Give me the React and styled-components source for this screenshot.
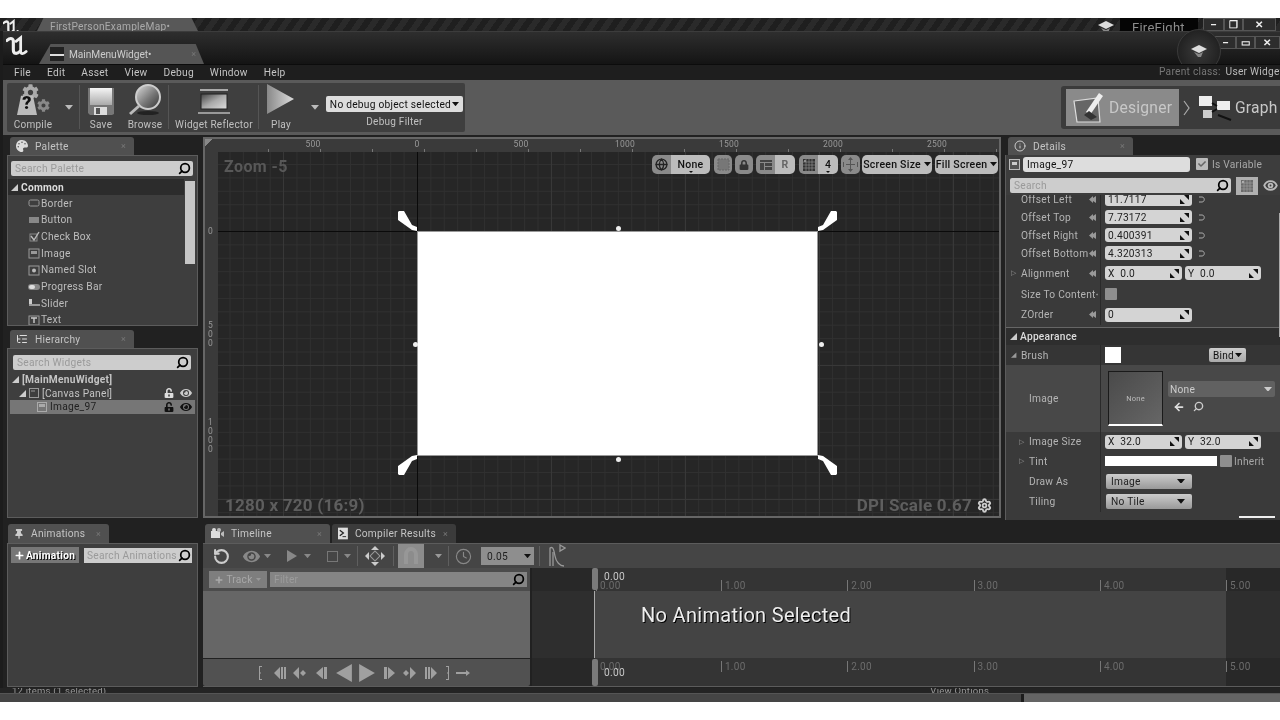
import styled, { createGlobalStyle } from "styled-components"
import { Search, Eye, RotateCcw, Clock, Globe, Settings, Info, ListTree, ArrowLeft } from "lucide-react"
import { FaCog, FaPlus, FaPalette, FaThumbtack, FaEye, FaUnlockAlt, FaCheck, FaLock } from "react-icons/fa"

const GlobalStyle = createGlobalStyle`
body {
    margin: 0;
    background: #fff;
    font-family: Roboto, "Liberation Sans", sans-serif;
}
`

const Logo = ({ size = 24 }) => (
    <svg width={size} height={size} viewBox="0 0 24 24" fill="none" stroke="#eee" strokeLinecap="round">
        <path d="M1 6 C4 3 7 3 8 6 V16 C8 21 12 21 15 18" strokeWidth="3.4" />
        <path d="M11 7 L16 3 V18 C16 21 19 21 22 18" strokeWidth="3" />
    </svg>
)

const Cap = () => (
    <svg width="16" height="14" viewBox="0 0 16 14">
        <path d="M0 5 L8 1 L16 5 L8 9 Z" fill="#ddd" />
        <path d="M3 8 L8 10 L12 8 L10 13 L7 13 Z" fill="#888" />
    </svg>
)

const Caret = ({ c = "#bbb", w = 8 }) => (
    <svg width={w} height={w * 0.6} viewBox="0 0 10 6"><path d="M0 0 H10 L5 6 Z" fill={c} /></svg>
)

const SaveIcon = () => (
    <svg width="28" height="29" viewBox="0 0 28 29">
        <defs>
            <linearGradient id="floppy" x1="0" y1="0" x2="0" y2="1">
                <stop offset="0" stopColor="#f5f5f5" /><stop offset="1" stopColor="#aaa" />
            </linearGradient>
        </defs>
        <path d="M1 1 H27 V27 L25 28 H3 L1 26 Z" fill="#777" />
        <rect x="3" y="1" width="22" height="17" fill="url(#floppy)" />
        <rect x="7" y="20" width="13" height="8" fill="#ddd" />
        <rect x="9" y="21" width="4" height="6" fill="#555" />
    </svg>
)

const BrowseIcon = () => (
    <svg width="34" height="32" viewBox="0 0 34 32">
        <defs>
            <linearGradient id="lens" x1="0" y1="0" x2="1" y2="1">
                <stop offset="0" stopColor="#ddd" /><stop offset="0.55" stopColor="#777" /><stop offset="1" stopColor="#333" />
            </linearGradient>
        </defs>
        <circle cx="20" cy="13" r="12" fill="url(#lens)" stroke="#ccc" strokeWidth="2" />
        <path d="M11 22 L2 30" stroke="#bbb" strokeWidth="3" />
        <ellipse cx="20" cy="29" rx="11" ry="2" fill="#222" />
    </svg>
)

const ReflectorIcon = () => (
    <svg width="34" height="28" viewBox="0 0 34 28">
        <defs>
            <linearGradient id="refl" x1="0" y1="0" x2="1" y2="1">
                <stop offset="0" stopColor="#444" /><stop offset="0.5" stopColor="#aaa" /><stop offset="1" stopColor="#ddd" />
            </linearGradient>
        </defs>
        <path d="M3 1 H31 V3 H3 Z" fill="#aaa" />
        <rect x="4" y="6" width="26" height="15" fill="url(#refl)" stroke="#222" />
        <path d="M1 24 H33 V26 H1 Z" fill="#999" />
    </svg>
)

const PlayIcon = () => (
    <svg width="30" height="33" viewBox="0 0 30 33">
        <defs>
            <linearGradient id="playg" x1="0" y1="0" x2="1" y2="0">
                <stop offset="0" stopColor="#888" /><stop offset="1" stopColor="#ddd" />
            </linearGradient>
        </defs>
        <path d="M1 1 L28 16 L1 31 Z" fill="url(#playg)" />
    </svg>
)

const DesignerIcon = () => (
    <svg width="34" height="34" viewBox="0 0 34 34">
        <path d="M3 10 L27 7 L29 31 L6 31 Z" fill="#666" stroke="#ddd" strokeWidth="1.2" />
        <path d="M15 21 L28 2 L32 5 L19 24 Z" fill="#eee" />
        <path d="M13 24 L18 20 L26 26 L20 29 Z" fill="#333" />
    </svg>
)

const GraphIcon = () => (
    <svg width="34" height="26" viewBox="0 0 34 26">
        <rect x="1" y="1" width="13" height="10" fill="#eee" />
        <rect x="19" y="6" width="13" height="9" fill="#eee" />
        <rect x="5" y="15" width="9" height="8" fill="#ccc" />
        <path d="M14 8 L19 11 M14 17 L19 14 M20 20 L33 25" stroke="#111" strokeWidth="2" />
    </svg>
)

const ChevronGlyph = () => (
    <svg width="7" height="16" viewBox="0 0 7 16" fill="none" stroke="#aaa" strokeWidth="1.2"><path d="M1 1 L6 8 L1 15" /></svg>
)

const CornerHandle = ({ flipX, flipY }) => (
    <svg width="20" height="20" viewBox="0 0 20 20" style={{ transform: `scale(${flipX ? -1 : 1}, ${flipY ? -1 : 1})`, display: "block" }}>
        <path d="M0 1 L1 0 H6 L14 14 L19 16 V20 L14 19 L0 9 Z" fill="#fff" />
    </svg>
)

const SpinArrows = () => (
    <svg width="9" height="9" viewBox="0 0 9 9">
        <path d="M4 0 H9 V5 Z M0 4 L5 9 H0 Z" fill="#111" />
    </svg>
)

const PinDiamond = () => (
    <svg width="9" height="9" viewBox="0 0 9 9">
        <path d="M0 4.5 L4 1 V3 L7 1 V8 L4 6 V8 Z" fill="#999" />
    </svg>
)

const ResetArrow = () => (
    <svg width="7" height="7" viewBox="0 0 7 7" fill="none" stroke="#aaa" strokeWidth="1">
        <path d="M1 1 H4 C7 1 7 6 4 6 H1" />
    </svg>
)

const TreeArrow = ({ open }) => (
    <svg width="7" height="7" viewBox="0 0 7 7">
        {open
            ? <path d="M7 0 V7 H0 Z" fill="#ccc" />
            : <path d="M1 0 L6 3.5 L1 7 Z" fill="none" stroke="#999" />}
    </svg>
)

const paletteIcons = {
    border: <rect x="1" y="3" width="10" height="6" rx="1.5" fill="none" stroke="#999" />,
    button: <rect x="1" y="3" width="10" height="6" fill="#888" />,
    check: <><rect x="2" y="3" width="7" height="7" fill="none" stroke="#888" /><path d="M3 5 L6 9 L11 1" fill="none" stroke="#bbb" strokeWidth="1.4" /></>,
    image: <><rect x="1" y="2" width="10" height="9" fill="none" stroke="#999" /><rect x="3" y="4" width="6" height="3" fill="#999" /></>,
    slot: <><rect x="1" y="2" width="10" height="9" fill="none" stroke="#999" /><circle cx="6" cy="6.5" r="2" fill="#bbb" /></>,
    progress: <><rect x="0" y="3" width="12" height="6" rx="3" fill="#888" /><rect x="1" y="4" width="6" height="4" rx="2" fill="#ddd" /></>,
    slider: <><rect x="1" y="2" width="3" height="6" fill="#ccc" /><rect x="1" y="7" width="11" height="2" fill="#999" /></>,
    text: <><rect x="1" y="2" width="10" height="9" fill="none" stroke="#999" /><path d="M3 4 H9 M6 4 V9" stroke="#ccc" strokeWidth="1.4" /></>,
}

const paletteItems = [
    ["border", "Border"], ["button", "Button"], ["check", "Check Box"], ["image", "Image"],
    ["slot", "Named Slot"], ["progress", "Progress Bar"], ["slider", "Slider"], ["text", "Text"],
]

const playbackIcons = [
    ["M6 1 H9 V2 H7 V7 L8 8 L7 9 V14 H9 V15 H6 Z", 16, 0],
    ["M1 8 L7 2 V14 Z M8 2 H10 V14 H8 Z M11 2 H13 V14 H11 Z", 16, 4],
    ["M1 8 L7 2 V14 Z M11 5 L14 8 L11 11 L8 8 Z", 16, 3],
    ["M2 8 L9 2 V14 Z M10 2 H13 V14 H10 Z", 16, 6],
    ["M1 8 L15 0 V16 Z", 18, 5],
    ["M1 0 L15 8 L1 16 Z", 18, 5],
    ["M3 2 H6 V14 H3 Z M7 2 L14 8 L7 14 Z", 16, 5],
    ["M5 5 L8 8 L5 11 L2 8 Z M9 2 L15 8 L9 14 Z", 16, 4],
    ["M3 2 H5 V14 H3 Z M6 2 H8 V14 H6 Z M9 2 L15 8 L9 14 Z", 16, 5],
    ["M7 1 H10 V15 H7 V14 H9 V9 L8 8 L9 7 V2 H7 Z", 16, 1],
    ["M1 7 H11 V5 L15 8 L11 11 V9 H1 Z", 16, 0],
]

const rulerLabels = [[95, "500"], [199, "0"], [303, "500"], [407, "1000"], [511, "1500"], [615, "2000"], [719, "2500"]]
const timeLabels = ["1.00", "2.00", "3.00", "4.00"]

const offsetRows = [["Offset Left", "11.7117"], ["Offset Top", "7.73172"], ["Offset Right", "0.400391"], ["Offset Bottom", "4.320313"]]

const App = () => {
    return (
        <Screen>
            <GlobalStyle />
            <TopMargin />
            <BackWindow>
                <BackBar>
                    <BackLogo><Logo size={16} /></BackLogo>
                    <BackTab>FirstPersonExampleMap•</BackTab>
                    <CapSlot><Cap /></CapSlot>
                    <ProjectName>FireFight</ProjectName>
                    <WinButtons $ml={5}>
                        <WinBtn $w={21}>–</WinBtn><WinBtn $w={19}>❐</WinBtn><WinBtn $w={33}>✕</WinBtn>
                    </WinButtons>
                </BackBar>

                <Editor>
                    <TitleBar>
                        <LogoSlot><Logo size={22} /></LogoSlot>
                        <DocTab>
                            <DocIcon />
                            <span>MainMenuWidget•</span>
                            <TabClose>×</TabClose>
                        </DocTab>
                        <CapGlow><Cap /></CapGlow>
                        <FrontButtons>
                            <WinBtn $w={21}>–</WinBtn><WinBtn $w={19}>▭</WinBtn><WinBtn $w={25}>✕</WinBtn>
                        </FrontButtons>
                    </TitleBar>

                    <MenuBar>
                        {["File", "Edit", "Asset", "View", "Debug", "Window", "Help"].map((m) => <MenuItem key={m}>{m}</MenuItem>)}
                        <ParentClass>Parent class: <strong>User Widget</strong></ParentClass>
                    </MenuBar>

                    <Toolbar>
                        <ToolPanel>
                            <ToolButton $w={52}>
                                <CompileIcon>
                                    <FaCog size={17} color="#aaa" />
                                    <GearSmall><FaCog size={13} color="#888" /></GearSmall>
                                    <Question>?</Question>
                                </CompileIcon>
                                <ToolLabel>Compile</ToolLabel>
                            </ToolButton>
                            <CaretSlot $w={20}><Caret /></CaretSlot>
                            <ToolSep />
                            <ToolButton $w={42}><SaveIcon /><ToolLabel>Save</ToolLabel></ToolButton>
                            <ToolButton $w={46}><BrowseIcon /><ToolLabel>Browse</ToolLabel></ToolButton>
                            <ToolSep />
                            <ToolButton $w={88} $ml={1}><ReflectorIcon /><ToolLabel>Widget Reflector</ToolLabel></ToolButton>
                            <ToolSep />
                            <ToolButton $w={44}><PlayIcon /><ToolLabel>Play</ToolLabel></ToolButton>
                            <CaretSlot $w={23}><Caret /></CaretSlot>
                            <DebugBox>
                                <DebugSelect>No debug object selected <Caret c="#111" w={7} /></DebugSelect>
                                <ToolLabel>Debug Filter</ToolLabel>
                            </DebugBox>
                        </ToolPanel>
                        <ModePanel>
                            <ModeButton $active><DesignerIcon />Designer</ModeButton>
                            <ModeChevron><ChevronGlyph /></ModeChevron>
                            <ModeButton><GraphIcon />Graph</ModeButton>
                        </ModePanel>
                    </Toolbar>

                    <Body>
                        <LeftColumn>
                            <Dock $h={189}>
                                <Tab $w={124} $ml={3}><FaPalette size={12} color="#ddd" />Palette<TabClose>×</TabClose></Tab>
                                <Panel>
                                    <SearchBox $m="5px 4px 3px 3px"><span>Search Palette</span><SearchGlyph /></SearchBox>
                                    <PaletteList>
                                        <PaletteRows>
                                            <CategoryRow><TreeArrow open />Common</CategoryRow>
                                            {paletteItems.map(([kind, label]) => (
                                                <PaletteRow key={label}>
                                                    <svg width="12" height="12" viewBox="0 0 12 12">{paletteIcons[kind]}</svg>
                                                    {label}
                                                </PaletteRow>
                                            ))}
                                        </PaletteRows>
                                        <PaletteTrack><PaletteThumb /></PaletteTrack>
                                    </PaletteList>
                                </Panel>
                            </Dock>
                            <Dock $h={188}>
                                <Tab $w={124} $ml={3}><ListTree size={12} color="#ddd" />Hierarchy<TabClose>×</TabClose></Tab>
                                <Panel>
                                    <SearchBox $m="6px 6px 3px 5px"><span>Search Widgets</span><SearchGlyph /></SearchBox>
                                    <TreeRow $indent={4} $bold><TreeArrow open />[MainMenuWidget]</TreeRow>
                                    <TreeRow $indent={11}>
                                        <TreeArrow open />
                                        <svg width="10" height="10" viewBox="0 0 10 10"><rect x="0.5" y="0.5" width="9" height="9" fill="none" stroke="#999" /><path d="M2 3 H6" stroke="#999" /></svg>
                                        [Canvas Panel]
                                        <TreeIcons><FaUnlockAlt size={10} color="#ddd" /><FaEye size={12} color="#ccc" /></TreeIcons>
                                    </TreeRow>
                                    <TreeRow $indent={29} $selected>
                                        <svg width="10" height="10" viewBox="0 0 10 10"><rect x="0.5" y="0.5" width="9" height="9" fill="none" stroke="#aaa" /><rect x="2" y="2" width="6" height="3" fill="#aaa" /></svg>
                                        Image_97
                                        <TreeIcons><FaUnlockAlt size={10} color="#111" /><FaEye size={12} color="#111" /></TreeIcons>
                                    </TreeRow>
                                </Panel>
                            </Dock>
                        </LeftColumn>

                        <CanvasFrame>
                            <RulerCorner />
                            <TopRuler>
                                {rulerLabels.map(([x, t]) => <TopLabel key={x} $x={x}>{t}</TopLabel>)}
                            </TopRuler>
                            <LeftRuler>
                                <SideLabel $y={75}>0</SideLabel>
                                <SideLabel $y={169}>500</SideLabel>
                                <SideLabel $y={266}>1000</SideLabel>
                            </LeftRuler>
                            <Grid>
                                <AxisX /><AxisY />
                                <WidgetImage />
                                <HandleSlot $x={180} $y={59}><CornerHandle /></HandleSlot>
                                <HandleSlot $x={599} $y={59}><CornerHandle flipX /></HandleSlot>
                                <HandleSlot $x={180} $y={303}><CornerHandle flipY /></HandleSlot>
                                <HandleSlot $x={599} $y={303}><CornerHandle flipX flipY /></HandleSlot>
                                <Dot $x={399} $y={75} /><Dot $x={196} $y={191} /><Dot $x={602} $y={191} /><Dot $x={399} $y={306} />
                                <ZoomText>Zoom -5</ZoomText>
                                <SizeText>1280 x 720 (16:9)</SizeText>
                                <DpiText>DPI Scale 0.67 <Settings size={15} color="#ccc" strokeWidth={3} /></DpiText>
                                <CanvasTools>
                                    <Seg>
                                        <SegPart $w={19} $dark><Globe size={13} color="#222" strokeWidth={2.4} /></SegPart>
                                        <SegPart $w={39}>None<SegCaret /></SegPart>
                                    </Seg>
                                    <Seg $ml={4}><SegPart $w={18} $dark><SquareGlyph /></SegPart></Seg>
                                    <Seg $ml={3}><SegPart $w={18} $dark><FaLock size={10} color="#333" /></SegPart></Seg>
                                    <Seg $ml={3}>
                                        <SegPart $w={19} $dark><LayoutGlyph /></SegPart>
                                        <SegPart $w={20} $muted>R</SegPart>
                                    </Seg>
                                    <Seg $ml={4}>
                                        <SegPart $w={19} $dark><GridGlyph /></SegPart>
                                        <SegPart $w={20}>4<SegCaret /></SegPart>
                                    </Seg>
                                    <Seg $ml={3}><SegPart $w={19} $dark><ScaleGlyph /></SegPart></Seg>
                                    <Seg $ml={2}><SegPart $w={70}>Screen Size&nbsp;<Caret c="#111" w={7} /></SegPart></Seg>
                                    <Seg $ml={3}><SegPart $w={63}>Fill Screen&nbsp;<Caret c="#111" w={7} /></SegPart></Seg>
                                </CanvasTools>
                            </Grid>
                        </CanvasFrame>

                        <RightColumn>
                            <Tab $w={125} $ml={3}><Info size={12} color="#ccc" />Details<TabClose>×</TabClose></Tab>
                            <DetailsPanel>
                                <NameRow>
                                    <svg width="11" height="11" viewBox="0 0 11 11"><rect x="0.5" y="0.5" width="10" height="10" fill="#555" stroke="#bbb" /><rect x="3" y="3" width="5" height="3" fill="#ccc" /></svg>
                                    <NameInput>Image_97</NameInput>
                                    <CheckBox $checked $ml={6}><FaCheck size={8} color="#666" /></CheckBox>
                                    <IsVariable>Is Variable</IsVariable>
                                </NameRow>
                                <FilterRow>
                                    <SearchBox $m="0"><span>Search</span><SearchGlyph /></SearchBox>
                                    <GridButton><GridGlyph /></GridButton>
                                    <Eye size={15} color="#bbb" strokeWidth={3} />
                                </FilterRow>
                                <PropScroll>
                                    <ScrollLine />
                                    {offsetRows.map(([label, val]) => (
                                        <PropRow key={label} $h={18}>
                                            <PropLabel>{label}<PinDiamond /></PropLabel>
                                            <PropValue>
                                                <NumBox $w={87}>{val}<SpinArrows /></NumBox>
                                                <ResetSlot><ResetArrow /></ResetSlot>
                                            </PropValue>
                                        </PropRow>
                                    ))}
                                    <PropRow $h={22}>
                                        <PropLabel $arrow>Alignment<PinDiamond /></PropLabel>
                                        <PropValue>
                                            <NumBox $w={77}>X&nbsp;&nbsp;0.0<SpinArrows /></NumBox>
                                            <NumBox $w={76} $ml={3}>Y&nbsp;&nbsp;0.0<SpinArrows /></NumBox>
                                        </PropValue>
                                    </PropRow>
                                    <PropRow $h={20}>
                                        <PropLabel>Size To Content<PinDiamond /></PropLabel>
                                        <PropValue><CheckBox /></PropValue>
                                    </PropRow>
                                    <PropRow $h={21}>
                                        <PropLabel>ZOrder<PinDiamond /></PropLabel>
                                        <PropValue><NumBox $w={87}>0<SpinArrows /></NumBox></PropValue>
                                    </PropRow>
                                    <SectionHeader><TreeArrow open />Appearance</SectionHeader>
                                    <PropRow $h={20} $bg="#353535">
                                        <PropLabel $open>Brush</PropLabel>
                                        <PropValue>
                                            <Swatch />
                                            <BindButton>Bind <Caret c="#111" w={7} /></BindButton>
                                        </PropValue>
                                    </PropRow>
                                    <PropRow $h={67} $bg="#484848">
                                        <PropLabel $sub>Image</PropLabel>
                                        <PropValue>
                                            <Thumb>None</Thumb>
                                            <ImageSide>
                                                <AssetSelect>None<Caret c="#ccc" /></AssetSelect>
                                                <AssetTools><ArrowLeft size={12} color="#ddd" strokeWidth={3.5} /><Search size={11} color="#ccc" strokeWidth={3} style={{ transform: "scaleX(-1)" }} /></AssetTools>
                                            </ImageSide>
                                        </PropValue>
                                    </PropRow>
                                    <PropRow $h={19}>
                                        <PropLabel $sub $arrow>Image Size</PropLabel>
                                        <PropValue>
                                            <NumBox $w={77}>X&nbsp;&nbsp;32.0<SpinArrows /></NumBox>
                                            <NumBox $w={76} $ml={3}>Y&nbsp;&nbsp;32.0<SpinArrows /></NumBox>
                                        </PropValue>
                                    </PropRow>
                                    <PropRow $h={20}>
                                        <PropLabel $sub $arrow>Tint</PropLabel>
                                        <PropValue>
                                            <TintBar />
                                            <CheckBox $ml={3} />
                                            <Inherit>Inherit</Inherit>
                                        </PropValue>
                                    </PropRow>
                                    <PropRow $h={20}>
                                        <PropLabel $sub>Draw As</PropLabel>
                                        <PropValue><ComboBox>Image<Caret c="#111" /></ComboBox></PropValue>
                                    </PropRow>
                                    <PropRow $h={21}>
                                        <PropLabel $sub>Tiling</PropLabel>
                                        <PropValue><ComboBox>No Tile<Caret c="#111" /></ComboBox></PropValue>
                                    </PropRow>
                                    <ClippedChip />
                                </PropScroll>
                            </DetailsPanel>
                        </RightColumn>
                    </Body>

                    <BottomDock>
                        <AnimColumn>
                            <Tab $w={101} $ml={1} $h={19}><FaThumbtack size={10} color="#ccc" />Animations<TabClose>×</TabClose></Tab>
                            <Panel>
                                <AnimBar>
                                    <AddButton><FaPlus size={9} color="#fff" />Animation</AddButton>
                                    <AnimSearch><span>Search Animations</span><SearchGlyph /></AnimSearch>
                                </AnimBar>
                            </Panel>
                        </AnimColumn>
                        <TimelineColumn>
                            <TabRow>
                                <Tab $w={125} $ml={2} $h={19}><FilmGlyph />Timeline<TabClose>×</TabClose></Tab>
                                <Tab $w={124} $ml={2} $h={19} $dim><ScriptGlyph />Compiler Results<TabClose>×</TabClose></Tab>
                            </TabRow>
                            <TimelinePanel>
                                <TimelineBar>
                                    <ToolSlot $ml={9} $w={18}><RotateCcw size={17} color="#ccc" strokeWidth={3} /></ToolSlot>
                                    <ToolSlot $ml={11} $w={20}><FaEye size={17} color="#888" /></ToolSlot>
                                    <ToolSlot $ml={1} $w={10}><Caret c="#888" w={7} /></ToolSlot>
                                    <ToolSlot $ml={12} $w={16}><svg width="10" height="12" viewBox="0 0 10 12"><path d="M0 0 L10 6 L0 12 Z" fill="#888" /></svg></ToolSlot>
                                    <ToolSlot $ml={2} $w={10}><Caret c="#888" w={7} /></ToolSlot>
                                    <ToolSlot $ml={12} $w={16}><svg width="11" height="11" viewBox="0 0 11 11"><rect x="0.5" y="0.5" width="10" height="10" fill="none" stroke="#777" /></svg></ToolSlot>
                                    <ToolSlot $ml={2} $w={10}><Caret c="#888" w={7} /></ToolSlot>
                                    <BarSep $ml={5} />
                                    <ToolSlot $ml={6} $w={22}><KeysGlyph /></ToolSlot>
                                    <BarSep $ml={7} />
                                    <MagnetButton><svg width="16" height="18" viewBox="0 0 16 18" fill="none" stroke="#979797" strokeWidth="4"><path d="M3 17 V8 C3 0 13 0 13 8 V17" /></svg></MagnetButton>
                                    <ToolSlot $ml={9} $w={10}><Caret c="#999" w={7} /></ToolSlot>
                                    <BarSep $ml={5} />
                                    <ToolSlot $ml={5} $w={18}><Clock size={17} color="#888" strokeWidth={1.6} /></ToolSlot>
                                    <SnapBox>0.05<Caret c="#111" w={7} /></SnapBox>
                                    <BarSep $ml={5} />
                                    <ToolSlot $ml={7} $w={20}><CurveGlyph /></ToolSlot>
                                </TimelineBar>
                                <TimelineBody>
                                    <TrackColumn>
                                        <TrackRow>
                                            <TrackButton><FaPlus size={8} color="#aaa" />Track <Caret c="#999" w={5} /></TrackButton>
                                            <FilterBox><span>Filter</span><SearchGlyph /></FilterBox>
                                        </TrackRow>
                                        <TrackArea />
                                        <PlaybackRow>
                                            {playbackIcons.map(([d, size, ml], i) => (
                                                <PlaybackSlot key={i} $ml={ml}>
                                                    <svg width={size} height={size} viewBox="0 0 16 16"><path d={d} fill="#a0a0a0" /></svg>
                                                </PlaybackSlot>
                                            ))}
                                        </PlaybackRow>
                                    </TrackColumn>
                                    <TimeColumn>
                                        <TimeRuler $h={23}>
                                            <TimeValue $top={3}>0.00</TimeValue>
                                            <TimeTick $x={64} $top={12}>0.00</TimeTick>
                                            {timeLabels.map((t, i) => <TimeTick key={t} $x={189 + i * 126.3} $top={12}>{t}</TimeTick>)}
                                            <TimeTick $x={694} $top={12}>5.00</TimeTick>
                                            <PlayHead $top={0} $h={22} />
                                        </TimeRuler>
                                        <TimeMiddle>
                                            <PlayLine />
                                            <NoAnimation>No Animation Selected</NoAnimation>
                                        </TimeMiddle>
                                        <TimeRuler $h={28}>
                                            <TimeTick $x={64} $top={3}>0.00</TimeTick>
                                            <TimeValue $top={9}>0.00</TimeValue>
                                            {timeLabels.map((t, i) => <TimeTick key={t} $x={189 + i * 126.3} $top={3}>{t}</TimeTick>)}
                                            <TimeTick $x={694} $top={3}>5.00</TimeTick>
                                            <PlayHead $top={1} $h={27} />
                                        </TimeRuler>
                                    </TimeColumn>
                                </TimelineBody>
                            </TimelinePanel>
                        </TimelineColumn>
                    </BottomDock>
                </Editor>

                <BackStatus>
                    <StatusText>12 items (1 selected)</StatusText>
                    <StatusText $ml={824}>View Options</StatusText>
                </BackStatus>
                <BackFooter><FooterLeft /><FooterRight /></BackFooter>
            </BackWindow>
        </Screen>
    )
}

const SearchGlyph = () => <Search size={13} color="#000" strokeWidth={3.2} style={{ transform: "scaleX(-1)", flexShrink: 0 }} />
const SquareGlyph = () => <svg width="13" height="13" viewBox="0 0 13 13"><rect x="1" y="1" width="11" height="11" fill="#777" stroke="#666" strokeDasharray="2 1" /></svg>
const LayoutGlyph = () => <svg width="12" height="12" viewBox="0 0 12 12"><path d="M0 1 H12 V3 H0 Z M0 4 H4 V11 H0 Z M5 4 H12 V7 H5 Z M5 8 H12 V11 H5 Z" fill="#444" /></svg>
const GridGlyph = () => <svg width="12" height="12" viewBox="0 0 12 12"><path d="M0 0 H12 V12 H0 Z M1 3 H3 V1 H1 Z" fill="#333" /><path d="M3 0 V12 M6 0 V12 M9 0 V12 M0 3 H12 M0 6 H12 M0 9 H12" stroke="#999" strokeWidth="0.6" /></svg>
const ScaleGlyph = () => <svg width="15" height="15" viewBox="0 0 15 15" fill="#555"><path d="M7.5 0 L10 3 H5 Z M7.5 15 L5 12 H10 Z M0 5 V10 H1 V5 Z M14 5 V10 H15 V5 Z M3 7 H12 V8 H3 Z M7 3 H8 V12 H7 Z" /></svg>
const FilmGlyph = () => <svg width="13" height="11" viewBox="0 0 13 11"><rect x="0" y="3" width="9" height="7" fill="#ddd" /><circle cx="3" cy="2" r="2" fill="#ddd" /><circle cx="8" cy="2" r="2" fill="#bbb" /><path d="M10 5 L13 3 V9 L10 7 Z" fill="#bbb" /></svg>
const ScriptGlyph = () => <svg width="11" height="13" viewBox="0 0 11 13"><rect width="11" height="13" fill="#ddd" /><path d="M2 3 L6 6 L2 9" stroke="#222" fill="none" strokeWidth="1.4" /><path d="M5 10 H9" stroke="#222" /></svg>
const KeysGlyph = () => <svg width="20" height="20" viewBox="0 0 20 20" fill="#ccc"><path d="M10 0 L14 4 H6 Z M10 20 L6 16 H14 Z M0 10 L4 6 V14 Z M20 10 L16 14 V6 Z" /><rect x="6.5" y="6.5" width="7" height="7" fill="none" stroke="#999" transform="rotate(45 10 10)" /></svg>
const CurveGlyph = () => <svg width="18" height="24" viewBox="0 0 18 24" fill="none" stroke="#999" strokeWidth="1.3"><path d="M2 22 V4 C5 2 6 6 7 12 C8 18 12 22 16 22" /><path d="M5 22 V8 M12 1 L17 4 L12 7 Z" /></svg>

export default App

const Screen = styled.div`
width: 1280px;
height: 720px;
background: #fff;
display: flex;
flex-direction: column;
overflow: hidden;
filter: blur(0.35px);
font-size: 10.2px;
letter-spacing: 0.25px;
color: #c8c8c8;
`

const TopMargin = styled.div`
height: 18px;
flex-shrink: 0;
`

const BackWindow = styled.div`
height: 684px;
display: flex;
flex-direction: column;
background: #1c1c1c;
`

const BackBar = styled.div`
height: 13px;
display: flex;
align-items: flex-start;
overflow: hidden;
background: repeating-linear-gradient(-55deg, #2a2a2a 0 6px, #1f1f1f 6px 12px);
`

const BackLogo = styled.div`
width: 37px;
padding-left: 3px;
box-sizing: border-box;
margin-top: 1px;
`

const BackTab = styled.div`
width: 161px;
height: 13px;
padding-left: 13px;
box-sizing: border-box;
background: #585858;
clip-path: polygon(0 100%, 4% 0, 96% 0, 100% 100%);
font-size: 10.2px;
line-height: 18px;
color: #aaa;
`

const CapSlot = styled.div`
margin-left: 900px;
margin-top: 2px;
width: 22px;
`

const ProjectName = styled.div`
width: 78px;
height: 13px;
background: #050505;
font-size: 13px;
line-height: 20px;
color: #8c8c8c;
padding-left: 12px;
box-sizing: border-box;
`

const WinButtons = styled.div`
display: flex;
margin-left: ${(p) => p.$ml}px;
height: 13px;
`

const FrontButtons = styled.div`
display: flex;
height: 13px;
margin: 4px 0 0 auto;
`

const WinBtn = styled.div`
width: ${(p) => p.$w}px;
height: 13px;
box-sizing: border-box;
border: 1px solid #555;
background: #2d2d2d;
color: #eee;
font-size: 10px;
font-weight: 700;
line-height: 11px;
text-align: center;
`

const Editor = styled.div`
height: 657px;
flex-shrink: 0;
margin-left: 3px;
display: flex;
flex-direction: column;
background: #212121;
border-top: 1px solid #3c3c3c;
box-sizing: border-box;
`

const TitleBar = styled.div`
height: 32px;
flex-shrink: 0;
display: flex;
background: linear-gradient(#2e2e2e, #141414);
position: relative;
`

const LogoSlot = styled.div`
width: 36px;
padding: 3px 0 0 3px;
box-sizing: border-box;
`

const DocTab = styled.div`
width: 165px;
height: 20px;
margin-top: 12px;
background: #555;
clip-path: polygon(0 100%, 7% 0, 95% 0, 100% 100%);
display: flex;
align-items: center;
gap: 5px;
padding-left: 11px;
box-sizing: border-box;
color: #ccc;
letter-spacing: -0.05px;
`

const DocIcon = styled.div`
width: 14px;
height: 14px;
background: linear-gradient(#222 50%, #ddd 50%, #ddd 65%, #222 65%);
`

const TabClose = styled.span`
margin-left: auto;
margin-right: 8px;
color: #777;
font-size: 9px;
`

const CapGlow = styled.div`
position: absolute;
left: 1174px;
top: -3px;
width: 44px;
height: 44px;
border-radius: 50%;
background: radial-gradient(#3a3a3a, #222 70%);
border: 1px solid #3a3a3a;
box-sizing: border-box;
display: flex;
align-items: center;
justify-content: center;
`

const MenuBar = styled.div`
height: 16px;
flex-shrink: 0;
display: flex;
align-items: center;
gap: 16px;
padding-left: 11px;
background: #1e1e1e;
border-top: 1px solid #0c0c0c;
box-sizing: border-box;
position: relative;
`

const MenuItem = styled.span`
color: #c4c4c4;
`

const ParentClass = styled.div`
position: absolute;
left: 1156px;
top: 1px;
white-space: nowrap;
color: #777;
strong {
    color: #bbb;
    font-weight: 400;
    margin-left: 2px;
}
`

const Toolbar = styled.div`
height: 55px;
flex-shrink: 0;
display: flex;
justify-content: space-between;
align-items: center;
background: #5a5a5a;
padding-left: 4px;
`

const ToolPanel = styled.div`
width: 458px;
height: 49px;
display: flex;
background: #3f3f3f;
border-radius: 2px;
`

const ToolButton = styled.div`
width: ${(p) => p.$w}px;
margin-left: ${(p) => p.$ml || 0}px;
height: 49px;
display: flex;
flex-direction: column;
align-items: center;
justify-content: flex-end;
gap: 2px;
padding-bottom: 1px;
box-sizing: border-box;
`

const ToolLabel = styled.span`
white-space: nowrap;
line-height: 13px;
font-size: 10px;
color: #c0c0c0;
`

const CompileIcon = styled.div`
width: 36px;
height: 32px;
position: relative;
svg {
    position: absolute;
    left: 7px;
    top: 0;
}
`

const GearSmall = styled.div`
position: absolute;
left: 15px;
top: 15px;
`

const Question = styled.span`
position: absolute;
left: 2px;
top: 7px;
width: 20px;
height: 24px;
background: #bbb;
clip-path: polygon(20% 20%, 80% 20%, 100% 100%, 0 100%);
color: #111;
font-size: 18px;
font-weight: 900;
line-height: 24px;
text-align: center;
`

const CaretSlot = styled.div`
width: ${(p) => p.$w}px;
display: flex;
align-items: center;
justify-content: center;
`

const ToolSep = styled.div`
width: 1px;
height: 44px;
margin-top: 2px;
background: #555;
`

const DebugBox = styled.div`
width: 137px;
display: flex;
flex-direction: column;
align-items: center;
padding-top: 13px;
gap: 3px;
`

const DebugSelect = styled.div`
width: 137px;
height: 16px;
box-sizing: border-box;
background: #ddd;
border-radius: 2px;
color: #111;
display: flex;
align-items: center;
justify-content: center;
gap: 1px;
white-space: nowrap;
`

const ModePanel = styled.div`
width: 219px;
height: 43px;
background: #3b3b3b;
border-radius: 3px 0 0 3px;
display: flex;
align-items: center;
padding-left: 5px;
box-sizing: border-box;
`

const ModeButton = styled.div`
width: ${(p) => (p.$active ? 113 : 86)}px;
height: 37px;
flex-shrink: 0;
background: ${(p) => (p.$active ? "#8a8a8a" : "transparent")};
display: flex;
align-items: center;
gap: ${(p) => (p.$active ? 4 : 3)}px;
padding-left: ${(p) => (p.$active ? 5 : 4)}px;
box-sizing: border-box;
font-size: 15.6px;
color: #c8c8c8;
`

const ModeChevron = styled.span`
width: 15px;
display: flex;
justify-content: center;
flex-shrink: 0;
`

const Body = styled.div`
height: 385px;
flex-shrink: 0;
display: flex;
padding-left: 4px;
background: #212121;
`

const LeftColumn = styled.div`
width: 191px;
flex-shrink: 0;
display: flex;
flex-direction: column;
padding-top: 2px;
gap: 4px;
`

const Dock = styled.div`
height: ${(p) => p.$h}px;
display: flex;
flex-direction: column;
`

const Tab = styled.div`
width: ${(p) => p.$w}px;
height: ${(p) => p.$h || 18}px;
flex-shrink: 0;
margin-left: ${(p) => p.$ml}px;
box-sizing: border-box;
border-radius: 3px 3px 0 0;
background: ${(p) => (p.$dim ? "#3b3b3b" : "#505050")};
display: flex;
align-items: center;
gap: 7px;
padding-left: 6px;
color: #c4c4c4;
white-space: nowrap;
`

const TabRow = styled.div`
display: flex;
`

const Panel = styled.div`
flex: 1;
min-height: 0;
overflow: hidden;
background: #3e3e3e;
border: 1px solid #5c5c5c;
box-sizing: border-box;
`

const SearchBox = styled.div`
flex: 1;
height: 15px;
margin: ${(p) => p.$m};
padding: 0 2px 0 4px;
display: flex;
align-items: center;
justify-content: space-between;
background: #cdcdcd;
border-radius: 2px;
color: #9a9a9a;
`

const PaletteList = styled.div`
display: flex;
height: 148px;
`

const PaletteRows = styled.div`
width: 176px;
overflow: hidden;
`

const CategoryRow = styled.div`
height: 16px;
background: #2c2c2c;
display: flex;
align-items: center;
gap: 3px;
padding-left: 3px;
font-weight: 700;
color: #ddd;
`

const PaletteRow = styled.div`
height: 16.65px;
display: flex;
align-items: center;
gap: 1px;
padding-left: 20px;
color: #bdbdbd;
`

const PaletteTrack = styled.div`
width: 10px;
margin-left: 1px;
padding-top: 2px;
`

const PaletteThumb = styled.div`
height: 83px;
background: #c6c6c6;
`

const TreeRow = styled.div`
height: 13.5px;
display: flex;
align-items: center;
gap: 3px;
margin: ${(p) => (p.$selected ? "0 2px 0 2px" : "0")};
padding-left: ${(p) => (p.$selected ? p.$indent - 2 : p.$indent)}px;
padding-right: ${(p) => (p.$selected ? 3 : 5)}px;
background: ${(p) => (p.$selected ? "#767676" : "transparent")};
color: ${(p) => (p.$selected ? "#222" : "#c4c4c4")};
font-weight: ${(p) => (p.$bold ? 700 : 400)};
&:nth-of-type(2) {
    margin-top: 3px;
}
`

const TreeIcons = styled.div`
margin-left: auto;
display: flex;
align-items: center;
gap: 6px;
`

const CanvasFrame = styled.div`
width: 798px;
height: 381px;
flex-shrink: 0;
margin: 2px 4px 0 5px;
box-sizing: border-box;
border: 2px solid #666;
display: grid;
grid-template-columns: 13px 1fr;
grid-template-rows: 13px 1fr;
background: #3a3a3a;
`

const RulerCorner = styled.div`
background: linear-gradient(135deg, #888 0 5px, transparent 5px);
`

const TopRuler = styled.div`
position: relative;
background:
    repeating-linear-gradient(90deg, transparent 0 51px, #777 51px 52px) -1px 100% / 100% 3px no-repeat;
`

const TopLabel = styled.span`
position: absolute;
left: ${(p) => p.$x}px;
top: 0;
transform: translateX(-50%);
font-size: 8.5px;
color: #999;
`

const LeftRuler = styled.div`
position: relative;
`

const SideLabel = styled.span`
position: absolute;
left: 3px;
top: ${(p) => p.$y}px;
width: 6px;
font-size: 8.5px;
line-height: 9px;
word-break: break-all;
color: #999;
`

const Grid = styled.div`
position: relative;
overflow: hidden;
background-color: #262626;
background-image:
    linear-gradient(#383838 1px, transparent 1px),
    linear-gradient(90deg, #383838 1px, transparent 1px),
    linear-gradient(#303030 1px, transparent 1px),
    linear-gradient(90deg, #303030 1px, transparent 1px);
background-size: 134px 134px, 134px 134px, 13.4px 13.4px, 13.4px 13.4px;
background-position: 199px 79px;
`

const AxisX = styled.div`
position: absolute;
left: 0;
right: 0;
top: 79px;
height: 1px;
background: #0a0a0a;
`

const AxisY = styled.div`
position: absolute;
left: 199px;
top: 0;
bottom: 0;
width: 1px;
background: #0a0a0a;
`

const WidgetImage = styled.div`
position: absolute;
left: 200px;
top: 80px;
width: 399px;
height: 223px;
background: #fff;
box-shadow: 0 0 0 1px #999;
`

const HandleSlot = styled.div`
position: absolute;
left: ${(p) => p.$x}px;
top: ${(p) => p.$y}px;
`

const Dot = styled.div`
position: absolute;
left: ${(p) => p.$x - 1}px;
top: ${(p) => p.$y - 1}px;
width: 5px;
height: 5px;
border-radius: 50%;
background: #eee;
`

const ZoomText = styled.div`
position: absolute;
left: 6px;
top: 5px;
font-size: 16px;
font-weight: 700;
letter-spacing: 0.4px;
color: #585858;
`

const SizeText = styled.div`
position: absolute;
left: 7px;
bottom: 1px;
font-size: 17px;
font-weight: 700;
color: #5e5e5e;
`

const DpiText = styled.div`
position: absolute;
right: 7px;
bottom: 1px;
font-size: 17px;
font-weight: 700;
color: #5e5e5e;
display: flex;
align-items: center;
gap: 5px;
`

const CanvasTools = styled.div`
position: absolute;
left: 434px;
top: 3px;
display: flex;
`

const Seg = styled.div`
height: 19px;
display: flex;
margin-left: ${(p) => p.$ml || 0}px;
border-radius: 5px;
overflow: hidden;
`

const SegPart = styled.div`
width: ${(p) => p.$w}px;
height: 19px;
display: flex;
align-items: center;
justify-content: center;
position: relative;
background: ${(p) => (p.$dark ? "#8a8a8a" : "#bcbcbc")};
color: ${(p) => (p.$muted ? "#666" : "#111")};
font-size: 10.5px;
font-weight: ${(p) => (p.$muted ? 700 : 500)};
white-space: nowrap;
`

const SegCaret = styled.i`
position: absolute;
left: 50%;
bottom: 1px;
margin-left: -2px;
border: 2px solid transparent;
border-top-color: #111;
border-bottom: 0;
`

const RightColumn = styled.div`
flex: 1;
display: flex;
flex-direction: column;
padding-top: 2px;
min-width: 0;
`

const DetailsPanel = styled.div`
flex: 1;
min-height: 0;
display: flex;
flex-direction: column;
background: #3d3d3d;
border-left: 1px solid #5c5c5c;
`

const NameRow = styled.div`
height: 18px;
flex-shrink: 0;
display: flex;
align-items: center;
padding-left: 3px;
`

const NameInput = styled.div`
width: 167px;
height: 15px;
margin-left: 3px;
padding-left: 4px;
box-sizing: border-box;
background: #ddd;
border-radius: 3px;
color: #111;
line-height: 15px;
`

const CheckBox = styled.div`
width: 12px;
height: 12px;
margin-left: ${(p) => p.$ml || 0}px;
background: ${(p) => (p.$checked ? "#bbb" : "#8e8e8e")};
border-radius: 1px;
display: flex;
align-items: center;
justify-content: center;
flex-shrink: 0;
`

const IsVariable = styled.span`
margin-left: 4px;
color: #a8a8a8;
`

const FilterRow = styled.div`
height: 19px;
flex-shrink: 0;
margin-top: 3px;
display: flex;
align-items: center;
padding: 0 2px 0 4px;
gap: 5px;
`

const GridButton = styled.div`
width: 22px;
height: 18px;
background: #b0b0b0;
display: flex;
align-items: center;
justify-content: center;
flex-shrink: 0;
svg {
    opacity: 0.55;
}
`

const PropScroll = styled.div`
flex: 1;
min-height: 0;
overflow: hidden;
position: relative;
background: #3a3a3a;
> :nth-child(2) {
    margin-top: -5px;
}
`

const ScrollLine = styled.div`
position: absolute;
right: 0;
top: 18px;
width: 1px;
height: 124px;
background: #aaa;
`

const PropRow = styled.div`
height: ${(p) => p.$h}px;
display: flex;
background: ${(p) => p.$bg || "transparent"};
`

const PropLabel = styled.div`
width: 95px;
flex-shrink: 0;
box-sizing: border-box;
border-right: 1px solid #2a2a2a;
padding-left: ${(p) => (p.$sub ? 23 : 15)}px;
display: flex;
align-items: center;
justify-content: space-between;
padding-right: 2px;
color: #b4b4b4;
white-space: nowrap;
position: relative;
&::before {
    content: ${(p) => (p.$arrow ? '"▷"' : p.$open ? '"◢"' : "none")};
    position: absolute;
    left: ${(p) => (p.$sub ? 13 : 5)}px;
    font-size: 7px;
    color: #999;
}
`

const PropValue = styled.div`
flex: 1;
display: flex;
align-items: center;
padding-left: 4px;
min-width: 0;
`

const NumBox = styled.div`
width: ${(p) => p.$w}px;
height: 14px;
flex-shrink: 0;
margin-left: ${(p) => p.$ml || 0}px;
padding: 0 3px;
box-sizing: border-box;
background: #d4d4d4;
border-radius: 3px;
display: flex;
align-items: center;
justify-content: space-between;
color: #222;
`

const ResetSlot = styled.div`
margin-left: 6px;
display: flex;
`

const SectionHeader = styled.div`
height: 18px;
margin-top: 2px;
display: flex;
align-items: center;
gap: 3px;
padding-left: 4px;
background: #2e2e2e;
border-top: 1px solid #666;
box-sizing: border-box;
font-weight: 500;
color: #ddd;
`

const Swatch = styled.div`
width: 16px;
height: 16px;
background: #fff;
`

const BindButton = styled.div`
margin-left: 88px;
width: 37px;
height: 14px;
background: linear-gradient(#ccc, #aaa);
border-radius: 2px;
color: #111;
font-size: 10px;
display: flex;
align-items: center;
justify-content: center;
gap: 1px;
`

const Thumb = styled.div`
width: 55px;
height: 55px;
flex-shrink: 0;
margin-left: 3px;
box-sizing: border-box;
background: linear-gradient(135deg, #4a4a4a, #666);
border: 1px solid #1a1a1a;
border-bottom: 2px solid #fff;
display: flex;
align-items: center;
justify-content: center;
font-size: 7.5px;
color: #bbb;
`

const ImageSide = styled.div`
margin-left: 5px;
display: flex;
flex-direction: column;
gap: 4px;
margin-bottom: 3px;
`

const AssetSelect = styled.div`
width: 107px;
height: 16px;
box-sizing: border-box;
padding: 0 3px 0 2px;
background: #616161;
border-radius: 2px;
display: flex;
align-items: center;
justify-content: space-between;
color: #ccc;
`

const AssetTools = styled.div`
display: flex;
gap: 8px;
padding-left: 5px;
`

const TintBar = styled.div`
width: 112px;
height: 10px;
background: #fff;
`

const Inherit = styled.span`
margin-left: 2px;
color: #a8a8a8;
`

const ComboBox = styled.div`
width: 86px;
height: 15px;
padding: 0 7px 0 5px;
margin-left: 1px;
box-sizing: border-box;
background: linear-gradient(#ccc, #999);
border-radius: 2px;
display: flex;
align-items: center;
justify-content: space-between;
color: #222;
`

const ClippedChip = styled.div`
width: 36px;
height: 2px;
margin: 4px 0 0 233px;
background: #eee;
`

const BottomDock = styled.div`
height: 168px;
flex-shrink: 0;
display: flex;
padding: 4px 0 1px 4px;
box-sizing: border-box;
gap: 5px;
`

const AnimColumn = styled.div`
width: 191px;
flex-shrink: 0;
display: flex;
flex-direction: column;
`

const AnimBar = styled.div`
display: flex;
align-items: center;
gap: 5px;
padding: 3px 5px 0 3px;
`

const AddButton = styled.div`
width: 68px;
height: 16px;
flex-shrink: 0;
background: #777;
display: flex;
align-items: center;
justify-content: center;
gap: 2px;
font-weight: 700;
color: #fff;
text-shadow: 1px 1px 0 #000;
`

const AnimSearch = styled.div`
flex: 1;
height: 15px;
padding: 0 1px 0 3px;
display: flex;
align-items: center;
justify-content: space-between;
background: #cdcdcd;
color: #9a9a9a;
white-space: nowrap;
overflow: hidden;
`

const TimelineColumn = styled.div`
flex: 1;
display: flex;
flex-direction: column;
min-width: 0;
`

const TimelinePanel = styled.div`
flex: 1;
min-height: 0;
display: flex;
flex-direction: column;
border-bottom: 1px solid #5c5c5c;
`

const TimelineBar = styled.div`
height: 25px;
flex-shrink: 0;
display: flex;
align-items: center;
background: #454545;
border-top: 1px solid #5c5c5c;
box-sizing: border-box;
`

const ToolSlot = styled.div`
width: ${(p) => p.$w}px;
margin-left: ${(p) => p.$ml}px;
flex-shrink: 0;
display: flex;
align-items: center;
justify-content: center;
`

const BarSep = styled.div`
width: 1px;
height: 20px;
flex-shrink: 0;
margin-left: ${(p) => p.$ml}px;
background: #5f5f5f;
`

const MagnetButton = styled.div`
width: 26px;
height: 24px;
flex-shrink: 0;
margin-left: 4px;
background: #8c8c8c;
display: flex;
align-items: center;
justify-content: center;
`

const SnapBox = styled.div`
width: 53px;
height: 18px;
flex-shrink: 0;
margin-left: 9px;
padding: 0 3px 0 6px;
box-sizing: border-box;
background: #8e8e8e;
display: flex;
align-items: center;
justify-content: space-between;
color: #222;
`

const TimelineBody = styled.div`
flex: 1;
min-height: 0;
display: flex;
gap: 2px;
`

const TrackColumn = styled.div`
width: 327px;
flex-shrink: 0;
display: flex;
flex-direction: column;
`

const TrackRow = styled.div`
height: 23px;
flex-shrink: 0;
display: flex;
align-items: center;
gap: 3px;
padding: 0 3px 0 6px;
background: #4c4c4c;
`

const TrackButton = styled.div`
width: 58px;
height: 17px;
flex-shrink: 0;
background: #7e7e7e;
display: flex;
align-items: center;
justify-content: center;
gap: 3px;
color: #a8a8a8;
`

const FilterBox = styled.div`
flex: 1;
height: 15px;
padding: 0 2px 0 4px;
background: #858585;
display: flex;
align-items: center;
justify-content: space-between;
color: #9c9c9c;
`

const TrackArea = styled.div`
height: 67px;
flex-shrink: 0;
background: #666;
`

const PlaybackRow = styled.div`
flex: 1;
display: flex;
align-items: center;
margin-top: 1px;
padding-left: 50px;
background: #515151;
border-radius: 0 0 2px 2px;
`

const PlaybackSlot = styled.div`
margin-left: ${(p) => p.$ml}px;
display: flex;
`

const TimeColumn = styled.div`
flex: 1;
min-width: 0;
display: flex;
flex-direction: column;
`

const TimeRuler = styled.div`
height: ${(p) => p.$h}px;
flex-shrink: 0;
position: relative;
background: linear-gradient(90deg, #282828 0 62px, #343434 62px 694px, #282828 694px);
`

const TimeValue = styled.span`
position: absolute;
left: 72px;
top: ${(p) => p.$top}px;
color: #c8c8c8;
`

const TimeTick = styled.span`
position: absolute;
left: ${(p) => p.$x}px;
top: ${(p) => p.$top}px;
padding-left: 3px;
border-left: 1px solid #777;
font-size: 10px;
color: #6c6c6c;
`

const PlayHead = styled.div`
position: absolute;
left: 60px;
top: ${(p) => p.$top}px;
width: 6px;
height: ${(p) => p.$h}px;
background: #7a7a7a;
border-radius: 2px;
`

const TimeMiddle = styled.div`
height: 67px;
flex-shrink: 0;
position: relative;
background: linear-gradient(90deg, #2e2e2e 0 62px, #444 62px 694px, #2e2e2e 694px);
`

const PlayLine = styled.div`
position: absolute;
left: 62px;
top: 0;
bottom: 0;
width: 1px;
background: #aaa;
`

const NoAnimation = styled.div`
position: absolute;
left: 109px;
top: 12px;
font-size: 20px;
letter-spacing: 0.3px;
color: #eee;
text-shadow: 1px 1px 0 #000;
white-space: nowrap;
`

const BackStatus = styled.div`
height: 5px;
flex-shrink: 0;
display: flex;
overflow: hidden;
padding-left: 12px;
background: #242424;
`

const StatusText = styled.span`
margin-left: ${(p) => p.$ml || 0}px;
margin-top: 1px;
line-height: 4px;
font-size: 9.5px;
color: #999;
white-space: nowrap;
`

const BackFooter = styled.div`
flex: 1;
display: flex;
border-top: 1px solid #555;
`

const FooterLeft = styled.div`
width: 1021px;
background: #454545;
`

const FooterRight = styled.div`
flex: 1;
background: #646464;
border-left: 3px solid #1c1c1c;
`
